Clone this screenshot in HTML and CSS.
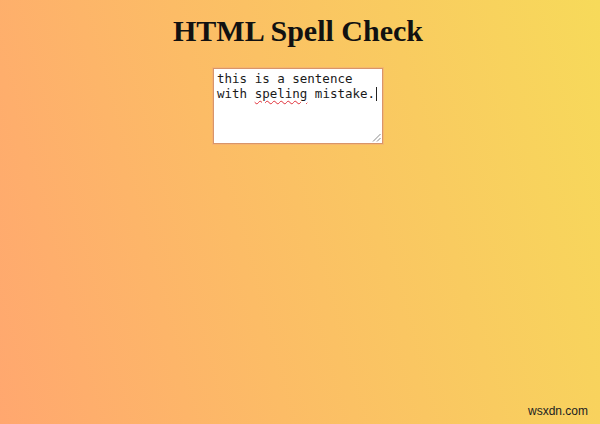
FILE: index.html
```html
<!DOCTYPE html>
<html lang="en">
<head>
<meta charset="utf-8">
<title>HTML Spell Check</title>
<link rel="stylesheet" href="styles.css">
</head>
<body>
<main class="page">
  <h1 class="title">HTML Spell Check</h1>
  <div class="textbox" contenteditable="true" spellcheck="true" role="textbox" aria-multiline="true">this is a sentence<br>with <span class="misspelled">speling</span> mistake.<span class="caret"></span>
    <svg class="grip" width="9" height="9" viewBox="0 0 9 9" aria-hidden="true">
      <line x1="8.5" y1="1" x2="1" y2="8.5" stroke="#8a8a8a" stroke-width="1"/>
      <line x1="8.5" y1="5" x2="5" y2="8.5" stroke="#8a8a8a" stroke-width="1"/>
    </svg>
  </div>
  <footer class="watermark">wsxdn.com</footer>
</main>
</body>
</html>
```
FILE: styles.css
```css
html, body {
  margin: 0;
  padding: 0;
}
body {
  width: 600px;
  height: 424px;
  overflow: hidden;
  background: linear-gradient(75deg, #ffa76f 0%, #fcbc66 40%, #f9cb60 70%, #f7da5a 100%);
}
.page {
  position: relative;
  height: 424px;
  display: flex;
  flex-direction: column;
  align-items: center;
}
.title {
  margin: 14px 0 0 -4px;
  font-family: "Liberation Serif", "Times New Roman", serif;
  font-weight: bold;
  font-size: 30px;
  line-height: 34px;
  color: #111;
}
.textbox {
  position: relative;
  box-sizing: border-box;
  width: 170px;
  height: 76px;
  margin: 20px 0 0 -4px;
  padding: 2px 3px;
  background: #fff;
  border: 1px solid #d9956a;
  box-shadow: 0 0 0 1px rgba(240,170,120,0.5);
  font-family: "DejaVu Sans Mono", "Liberation Mono", monospace;
  font-size: 12.5px;
  line-height: 15px;
  color: #1a1a1a;
  white-space: pre-wrap;
  outline: none;
}
.misspelled {
  text-decoration: underline wavy #e0303a;
  text-decoration-thickness: 1px;
  text-underline-offset: 2px;
}
.caret {
  display: inline-block;
  width: 1px;
  height: 14px;
  margin-left: 1px;
  vertical-align: -3px;
  background: #222;
}
.grip {
  position: absolute;
  right: 1px;
  bottom: 1px;
}
.watermark {
  position: absolute;
  right: 12px;
  bottom: 6px;
  font-family: "Liberation Sans", Arial, sans-serif;
  font-size: 12px;
  color: #222;
}
```
